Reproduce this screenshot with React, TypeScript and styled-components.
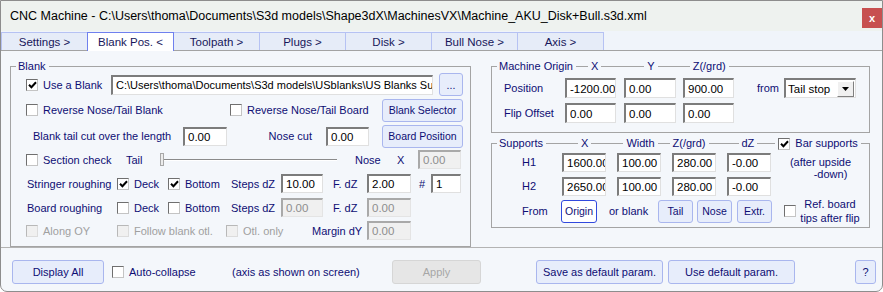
import React from "react";
import styled, { createGlobalStyle } from "styled-components";

const GlobalStyle = createGlobalStyle`
  html, body {
    margin: 0;
    padding: 0;
    background: #ffffff;
  }
  * {
    box-sizing: border-box;
  }
`;

const NAVY = "#0e0e74";
const GREY_TEXT = "#a0a0a0";

const Window = styled.div`
  width: 883px;
  height: 292px;
  display: flex;
  flex-direction: column;
  border: 1px solid #8d8d8d;
  border-radius: 0 0 7px 7px;
  background: #f4f7fb;
  overflow: hidden;
  font-family: "Liberation Sans", Arial, sans-serif;
  font-size: 11px;
  color: ${NAVY};
`;

const TitleBar = styled.div`
  flex: none;
  height: 30px;
  display: flex;
  align-items: flex-start;
  background: #eef2ef;
`;

const Title = styled.div`
  flex: 1;
  padding: 8px 0 0 9px;
  font-size: 12.5px;
  line-height: 14px;
  color: #000;
  white-space: nowrap;
`;

const CloseButton = styled.div`
  flex: none;
  width: 20px;
  height: 20px;
  margin-top: 7px;
  display: flex;
  align-items: center;
  justify-content: center;
  background: #c75050;
  color: #fff;
  font-weight: bold;
  font-size: 11px;
`;

const TabStrip = styled.div`
  flex: none;
  height: 20px;
  display: flex;
  align-items: flex-end;
  background: #f0f4fa;
  border-bottom: 1px solid #a3a3a3;
`;

const Tab = styled.div<{ $active?: boolean }>`
  position: relative;
  width: 87px;
  height: ${(p) => (p.$active ? 19 : 18)}px;
  margin-right: -1px;
  margin-bottom: ${(p) => (p.$active ? -1 : 0)}px;
  z-index: ${(p) => (p.$active ? 1 : 0)};
  display: flex;
  align-items: center;
  justify-content: center;
  border: 1px solid ${(p) => (p.$active ? "#6f80ee" : "#b6c2f3")};
  border-bottom: none;
  background: ${(p) => (p.$active ? "#ffffff" : "#e6ecf8")};
  font-size: 11.5px;
  color: #16165a;
  white-space: nowrap;
`;

const Panel = styled.div`
  flex: none;
  height: 197px;
  display: flex;
  gap: 20px;
  padding: 9px 0 0 9px;
  border-bottom: 1px solid #b3b3b3;
`;

const Group = styled.fieldset<{ $w: number }>`
  width: ${(p) => p.$w}px;
  flex: none;
  margin: 0;
  padding: 0 0 0 5px;
  min-width: 0;
  border: 1px solid #a4a4a4;
`;

const Legend = styled.legend`
  padding: 0 3px 0 2px;
  line-height: 13px;
  display: flex;
  align-items: center;
  white-space: nowrap;
`;

const Rule = styled.span<{ $w: number }>`
  width: ${(p) => p.$w}px;
  height: 1px;
  margin: 0 3px;
  background: #a4a4a4;
  flex: none;
`;

const Row = styled.div<{ $h: number; $pl?: number; $mt?: number }>`
  height: ${(p) => p.$h}px;
  margin-top: ${(p) => p.$mt ?? 0}px;
  padding-left: ${(p) => p.$pl ?? 10}px;
  display: flex;
  align-items: center;
  white-space: nowrap;
`;

const Cell = styled.div<{ $w: number; $pl?: number; $pr?: number; $right?: boolean; $muted?: boolean }>`
  width: ${(p) => p.$w}px;
  flex: none;
  padding-left: ${(p) => p.$pl ?? 0}px;
  padding-right: ${(p) => p.$pr ?? 0}px;
  text-align: ${(p) => (p.$right ? "right" : "left")};
  color: ${(p) => (p.$muted ? GREY_TEXT : "inherit")};
  white-space: nowrap;
`;

const Field = styled.input<{ $w: number; $h?: number; $ml?: number; $size?: number }>`
  width: ${(p) => p.$w}px;
  height: ${(p) => p.$h ?? 19}px;
  flex: none;
  margin: 0 0 0 ${(p) => p.$ml ?? 0}px;
  padding: 0 0 0 3px;
  border-style: solid;
  border-width: 2px 1px 1px 2px;
  border-color: #7c7c7c #e0e0e0 #e0e0e0 #7c7c7c;
  border-radius: 0;
  outline: none;
  background: #ffffff;
  font-family: "Liberation Sans", Arial, sans-serif;
  font-size: ${(p) => p.$size ?? 11.5}px;
  color: #000;

  &:disabled {
    background: #f0f0f0;
    color: #8e8e8e;
    border-color: #a9a9a9 #e4e4e4 #e4e4e4 #a9a9a9;
  }
`;

const Button = styled.button<{ $w: number; $h?: number; $ml?: number; $primary?: boolean; $size?: number }>`
  width: ${(p) => p.$w}px;
  height: ${(p) => p.$h ?? 23}px;
  margin: 0 0 0 ${(p) => p.$ml ?? 0}px;
  padding: 0;
  flex: none;
  border: 1px solid ${(p) => (p.$primary ? "#3149de" : "#a9b6ee")};
  border-radius: 3px;
  background: ${(p) => (p.$primary ? "#ffffff" : "#e7edfb")};
  font-family: "Liberation Sans", Arial, sans-serif;
  font-size: ${(p) => p.$size ?? 10.5}px;
  color: ${NAVY};
  white-space: nowrap;

  &:disabled {
    background: #e6e6e6;
    border-color: #d6d6d6;
    color: #a6a6a6;
  }
`;

const Box = styled.span<{ $disabled?: boolean }>`
  width: 12px;
  height: 12px;
  flex: none;
  display: flex;
  align-items: center;
  justify-content: center;
  border: 1px solid;
  border-color: ${(p) => (p.$disabled ? "#b8b8b8 #dcdcdc #dcdcdc #b8b8b8" : "#6f6f6f #c4c4c4 #c4c4c4 #6f6f6f")};
  background: ${(p) => (p.$disabled ? "#f0f0f0" : "#ffffff")};
`;

const CheckWrap = styled.label<{ $w?: number; $disabled?: boolean }>`
  width: ${(p) => (p.$w ? `${p.$w}px` : "auto")};
  flex: none;
  display: flex;
  align-items: center;
  gap: 5px;
  color: ${(p) => (p.$disabled ? GREY_TEXT : "inherit")};
  white-space: nowrap;
`;

const Check = ({ checked, disabled }: { checked?: boolean; disabled?: boolean }) => (
  <Box $disabled={disabled}>
    {checked && (
      <svg width="9" height="8" viewBox="0 0 9 8">
        <path d="M1 3.8 L3.4 6.2 L8 1.2" stroke="#000" strokeWidth="2" fill="none" />
      </svg>
    )}
  </Box>
);

const CheckItem: React.FC<{ w?: number; checked?: boolean; disabled?: boolean; children?: React.ReactNode }> = ({
  w,
  checked,
  disabled,
  children,
}) => (
  <CheckWrap $w={w} $disabled={disabled}>
    <Check checked={checked} disabled={disabled} />
    {children}
  </CheckWrap>
);

const SliderTrack = styled.div<{ $w: number }>`
  position: relative;
  width: ${(p) => p.$w}px;
  height: 2px;
  flex: none;
  border-top: 1px solid #8a8a8a;
  border-bottom: 1px solid #ffffff;
`;

const SliderThumb = styled.div`
  position: absolute;
  left: 0;
  top: -7px;
  width: 4px;
  height: 13px;
  background: #ececec;
  border: 1px solid #a8a8a8;
`;

const SelectBox = styled.div`
  width: 72px;
  height: 20px;
  flex: none;
  display: flex;
  align-items: center;
  justify-content: space-between;
  border-style: solid;
  border-width: 2px 1px 1px 2px;
  border-color: #7c7c7c #e0e0e0 #e0e0e0 #7c7c7c;
  background: #ffffff;
  padding-left: 2px;
  font-size: 11.5px;
  color: #000;
`;

const SelectArrow = styled.div`
  width: 17px;
  height: 16px;
  margin-right: 1px;
  display: flex;
  align-items: center;
  justify-content: center;
  background: #f0f0f0;
  border: 1px solid;
  border-color: #ffffff #808080 #808080 #ffffff;
`;

const RightColumn = styled.div`
  width: 379px;
  flex: none;
  display: flex;
  flex-direction: column;
`;

const SupportsGrid = styled.div`
  display: grid;
  grid-template-columns: 54px 44px 44px 44px 44px 1fr;
  grid-template-rows: 24px 24px 26px;
  column-gap: 11px;
  align-items: center;
  padding-bottom: 3px;
`;

const RowLabel = styled.div`
  padding-left: 10px;
  text-align: center;
`;

const FromRow = styled.div`
  grid-column: 1 / 6;
  display: flex;
  align-items: center;
  white-space: nowrap;
`;

const Note = styled.div`
  grid-column: 6;
  grid-row: 1 / 3;
  align-self: start;
  margin-top: 6px;
  padding-right: 10px;
  text-align: center;
  line-height: 12px;
`;

const NoteLine = styled.div<{ $indent?: number }>`
  padding-left: ${(p) => p.$indent ?? 0}px;
`;

const RefBlock = styled.div`
  grid-column: 6;
  grid-row: 3;
  display: flex;
  align-items: center;
  padding-left: 2px;
`;

const RefText = styled.div`
  width: 66px;
  margin-left: 1px;
  text-align: center;
  line-height: 14px;
`;

const BottomBar = styled.div`
  flex: 1;
  display: flex;
  align-items: flex-start;
  padding: 12px 6px 0 11px;
  font-size: 11px;
  white-space: nowrap;
`;

const BarCell = styled.div<{ $w: number; $pl?: number }>`
  width: ${(p) => p.$w}px;
  height: 24px;
  flex: none;
  padding-left: ${(p) => p.$pl ?? 0}px;
  display: flex;
  align-items: center;
`;

const Spacer = styled.div`
  flex: 1;
`;

const tabs = ["Settings >", "Blank Pos. <", "Toolpath >", "Plugs >", "Disk >", "Bull Nose >", "Axis >"];

const App: React.FC = () => {
  return (
    <>
      <GlobalStyle />
      <Window>
        <TitleBar>
          <Title>
            CNC Machine - C:\Users\thoma\Documents\S3d models\Shape3dX\MachinesVX\Machine_AKU_Disk+Bull.s3d.xml
          </Title>
          <CloseButton>x</CloseButton>
        </TitleBar>

        <TabStrip>
          {tabs.map((t, idx) => (
            <Tab key={t} $active={idx === 1}>
              {t}
            </Tab>
          ))}
        </TabStrip>

        <Panel>
          <Group $w={461}>
            <Legend>Blank</Legend>
            <Row $h={23}>
              <CheckItem w={85} checked>
                Use a Blank
              </CheckItem>
              <Field
                $w={322}
                $h={20}
                $size={11}
                readOnly
                value="C:\Users\thoma\Documents\S3d models\USblanks\US Blanks Super Blue.s3dx"
              />
              <Button $w={24} $ml={6}>
                ...
              </Button>
            </Row>
            <Row $h={28}>
              <CheckItem w={204}>Reverse Nose/Tail Blank</CheckItem>
              <CheckItem w={152}>Reverse Nose/Tail Board</CheckItem>
              <Button $w={81}>Blank Selector</Button>
            </Row>
            <Row $h={24}>
              <Cell $w={157} $pl={7}>
                Blank tail cut over the length
              </Cell>
              <Field $w={44} readOnly value="0.00" />
              <Cell $w={99} $pr={14} $right>
                Nose cut
              </Cell>
              <Field $w={43} readOnly value="0.00" />
              <Button $w={81} $ml={13}>
                Board Position
              </Button>
            </Row>
            <Row $h={23}>
              <CheckItem w={100}>Section check</CheckItem>
              <Cell $w={34}>Tail</Cell>
              <SliderTrack $w={177}>
                <SliderThumb />
              </SliderTrack>
              <Cell $w={60} $pl={18}>
                Nose
              </Cell>
              <Cell $w={21}>X</Cell>
              <Field $w={43} disabled value="0.00" />
            </Row>
            <Row $h={25}>
              <Cell $w={91} $pl={1}>
                Stringer roughing
              </Cell>
              <CheckItem w={51} checked>
                Deck
              </CheckItem>
              <CheckItem w={63} checked>
                Bottom
              </CheckItem>
              <Cell $w={50}>Steps dZ</Cell>
              <Field $w={42} readOnly value="10.00" />
              <Cell $w={44} $pl={10}>
                F. dZ
              </Cell>
              <Field $w={44} readOnly value="2.00" />
              <Cell $w={20} $pl={8}>
                #
              </Cell>
              <Field $w={30} readOnly value="1" />
            </Row>
            <Row $h={23}>
              <Cell $w={91} $pl={1}>
                Board roughing
              </Cell>
              <CheckItem w={51}>Deck</CheckItem>
              <CheckItem w={63}>Bottom</CheckItem>
              <Cell $w={50}>Steps dZ</Cell>
              <Field $w={42} disabled value="0.00" />
              <Cell $w={44} $pl={10}>
                F. dZ
              </Cell>
              <Field $w={44} disabled value="0.00" />
            </Row>
            <Row $h={23}>
              <CheckItem w={91} disabled>
                Along OY
              </CheckItem>
              <CheckItem w={109} disabled>
                Follow blank otl.
              </CheckItem>
              <CheckItem w={86} disabled>
                Otl. only
              </CheckItem>
              <Cell $w={55}>Margin dY</Cell>
              <Field $w={44} disabled value="0.00" />
            </Row>
          </Group>

          <RightColumn>
            <Group $w={379}>
              <Legend>
                Machine Origin
                <Rule $w={12} />
                X
                <Rule $w={43} />
                Y
                <Rule $w={32} />
                Z(/grd)
              </Legend>
              <Row $h={24} $pl={7} $mt={3}>
                <Cell $w={61}>Position</Cell>
                <Field $w={51} $h={20} readOnly value="-1200.00" />
                <Field $w={52} $h={20} $ml={8} readOnly value="0.00" />
                <Field $w={51} $h={20} $ml={7} readOnly value="900.00" />
                <Cell $w={50} $pl={23}>
                  from
                </Cell>
                <SelectBox>
                  Tail stop
                  <SelectArrow>
                    <svg width="7" height="4" viewBox="0 0 7 4">
                      <path d="M0 0 H7 L3.5 4 Z" fill="#000" />
                    </svg>
                  </SelectArrow>
                </SelectBox>
              </Row>
              <Row $h={26} $pl={7} style={{ marginBottom: 6 }}>
                <Cell $w={61}>Flip Offset</Cell>
                <Field $w={51} $h={20} readOnly value="0.00" />
                <Field $w={52} $h={20} $ml={8} readOnly value="0.00" />
                <Field $w={51} $h={20} $ml={7} readOnly value="0.00" />
              </Row>
            </Group>

            <Group $w={379} style={{ marginTop: 4 }}>
              <Legend>
                Supports
                <Rule $w={32} />
                X
                <Rule $w={32} />
                Width
                <Rule $w={12} />
                Z(/grd)
                <Rule $w={30} />
                dZ
                <Rule $w={18} />
                <CheckItem checked>Bar supports</CheckItem>
              </Legend>
              <SupportsGrid>
                <RowLabel>H1</RowLabel>
                <Field $w={44} readOnly value="1600.00" />
                <Field $w={44} readOnly value="100.00" />
                <Field $w={44} readOnly value="280.00" />
                <Field $w={44} readOnly value="-0.00" />
                <Note>
                  <NoteLine>(after upside</NoteLine>
                  <NoteLine $indent={20}>-down)</NoteLine>
                </Note>
                <RowLabel>H2</RowLabel>
                <Field $w={44} readOnly value="2650.00" />
                <Field $w={44} readOnly value="100.00" />
                <Field $w={44} readOnly value="280.00" />
                <Field $w={44} readOnly value="-0.00" />
                <FromRow>
                  <Cell $w={64} $pl={25}>
                    From
                  </Cell>
                  <Button $w={36} $primary>
                    Origin
                  </Button>
                  <Cell $w={61} $pl={12}>
                    or blank
                  </Cell>
                  <Button $w={35}>Tail</Button>
                  <Button $w={35} $ml={4}>
                    Nose
                  </Button>
                  <Button $w={35} $ml={5}>
                    Extr.
                  </Button>
                </FromRow>
                <RefBlock>
                  <Check />
                  <RefText>
                    Ref. board
                    <br />
                    tips after flip
                  </RefText>
                </RefBlock>
              </SupportsGrid>
            </Group>
          </RightColumn>
        </Panel>

        <BottomBar>
          <Button $w={92} $h={24} $size={11}>
            Display All
          </Button>
          <BarCell $w={128} $pl={8}>
            <CheckItem>Auto-collapse</CheckItem>
          </BarCell>
          <BarCell $w={160}>(axis as shown on screen)</BarCell>
          <Button $w={89} $h={24} $size={11} disabled>
            Apply
          </Button>
          <Button $w={127} $h={24} $ml={55} $size={11}>
            Save as default param.
          </Button>
          <Button $w={127} $h={24} $ml={5} $size={11}>
            Use default param.
          </Button>
          <Spacer />
          <Button $w={21} $h={24} $size={11}>
            ?
          </Button>
        </BottomBar>
      </Window>
    </>
  );
};

export default App;
